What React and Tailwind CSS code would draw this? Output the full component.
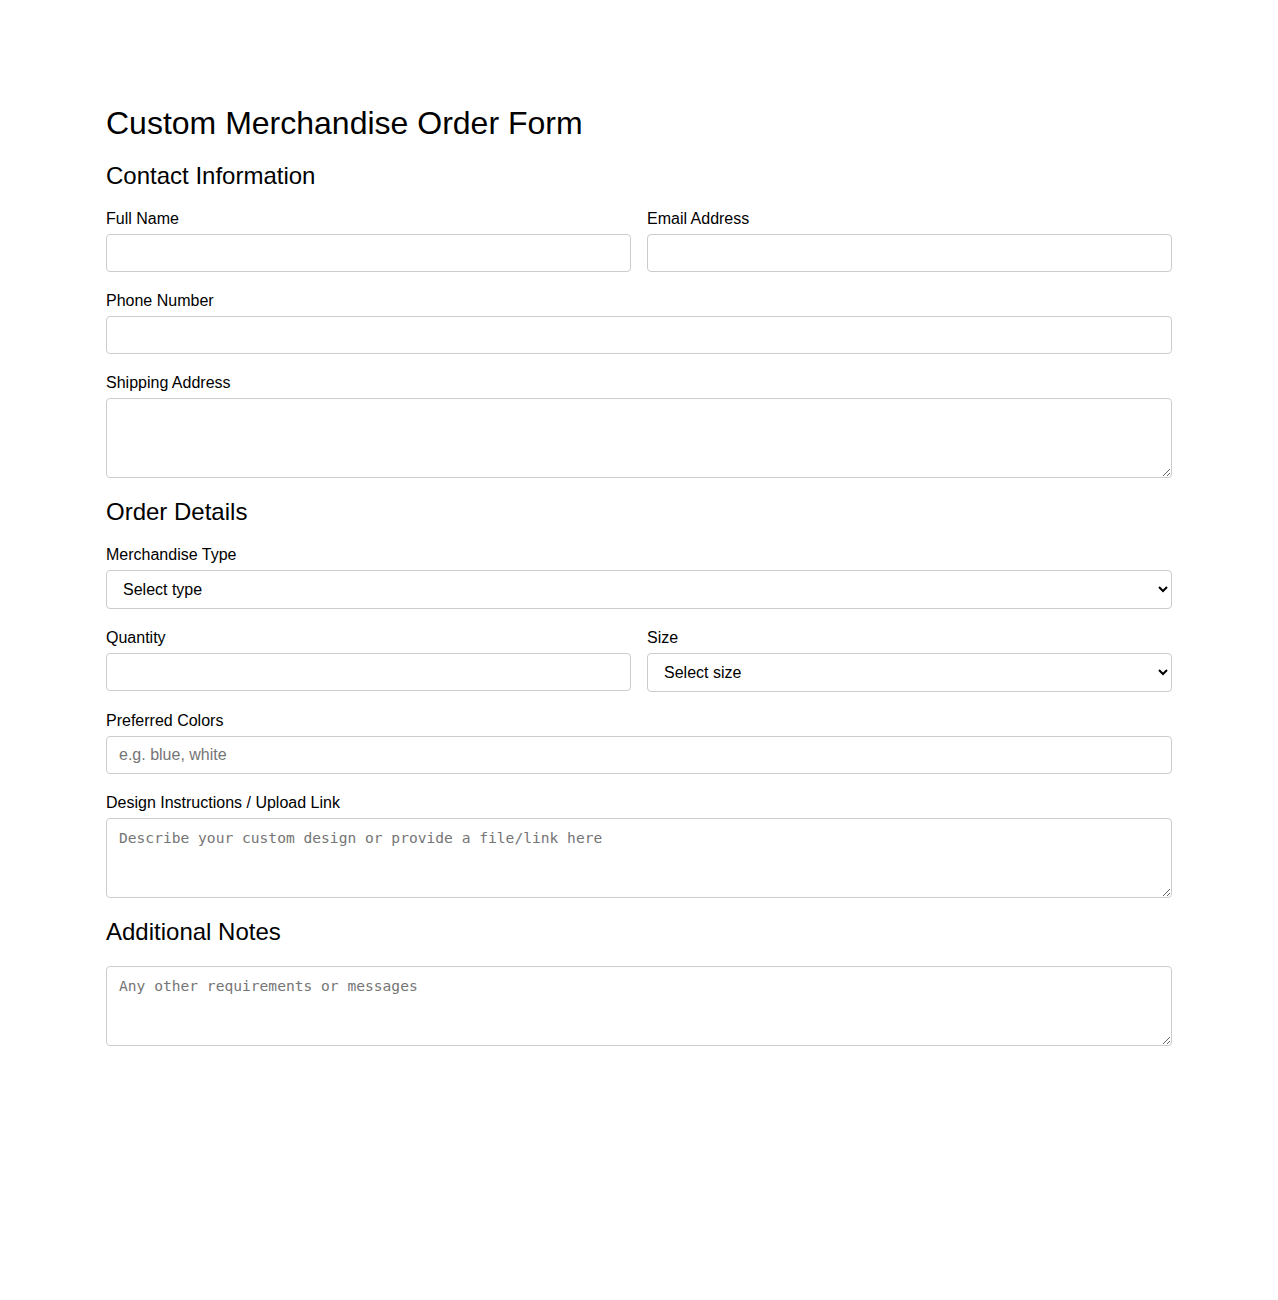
import React, { useState } from 'react';

const inputClass =
  'block w-full h-[38px] px-3 border border-[#ccc] rounded-[4px] bg-white text-[16px] text-black placeholder:text-[#757575] outline-none focus:border-[#888]';
const selectClass =
  'block w-full h-[39px] px-3 border border-[#ccc] rounded-[4px] bg-white text-[16px] text-black outline-none focus:border-[#888]';
const areaClass =
  'block w-full h-[80px] px-3 pt-[8px] pb-[10px] border border-[#ccc] rounded-[4px] bg-white text-[14.6px] text-black placeholder:text-[#757575] outline-none focus:border-[#888]';

const Field = ({ label, children }) => (
  <div>
    <label className="block text-[16px] leading-[18px] mb-[6px]">{label}</label>
    {children}
  </div>
);

const App = () => {
  const [form, setForm] = useState({
    name: '',
    email: '',
    phone: '',
    address: '',
    type: '',
    quantity: '',
    size: '',
    colors: '',
    design: '',
    notes: '',
  });

  const update = (key) => (e) => setForm({ ...form, [key]: e.target.value });

  return (
    <div
      className="min-h-[1300px] bg-white text-black"
      style={{ fontFamily: '"Liberation Sans", Arial, sans-serif' }}
    >
      <form
        onSubmit={(e) => e.preventDefault()}
        className="max-w-[1066px] mx-auto pt-[105px] flex flex-col gap-5"
      >
        <h1 className="text-[32px] leading-[37px] font-normal">Custom Merchandise Order Form</h1>

        <h2 className="text-[24px] leading-[28px] font-normal">Contact Information</h2>

        <div className="grid grid-cols-2 gap-4">
          <Field label="Full Name">
            <input type="text" value={form.name} onChange={update('name')} className={inputClass} />
          </Field>
          <Field label="Email Address">
            <input type="email" value={form.email} onChange={update('email')} className={inputClass} />
          </Field>
        </div>

        <Field label="Phone Number">
          <input type="tel" value={form.phone} onChange={update('phone')} className={inputClass} />
        </Field>

        <Field label="Shipping Address">
          <textarea
            value={form.address}
            onChange={update('address')}
            className={areaClass}
            style={{ fontFamily: '"DejaVu Sans Mono", monospace' }}
          />
        </Field>

        <h2 className="text-[24px] leading-[28px] font-normal">Order Details</h2>

        <Field label="Merchandise Type">
          <select value={form.type} onChange={update('type')} className={selectClass}>
            <option value="">Select type</option>
            <option>T-Shirt</option>
            <option>Hoodie</option>
            <option>Mug</option>
            <option>Cap</option>
            <option>Tote Bag</option>
          </select>
        </Field>

        <div className="grid grid-cols-2 gap-4">
          <Field label="Quantity">
            <input type="number" min="1" value={form.quantity} onChange={update('quantity')} className={inputClass} />
          </Field>
          <Field label="Size">
            <select value={form.size} onChange={update('size')} className={selectClass}>
              <option value="">Select size</option>
              <option>S</option>
              <option>M</option>
              <option>L</option>
              <option>XL</option>
              <option>XXL</option>
            </select>
          </Field>
        </div>

        <Field label="Preferred Colors">
          <input
            type="text"
            value={form.colors}
            onChange={update('colors')}
            placeholder="e.g. blue, white"
            className={inputClass}
          />
        </Field>

        <Field label="Design Instructions / Upload Link">
          <textarea
            value={form.design}
            onChange={update('design')}
            placeholder="Describe your custom design or provide a file/link here"
            className={areaClass}
            style={{ fontFamily: '"DejaVu Sans Mono", monospace' }}
          />
        </Field>

        <h2 className="text-[24px] leading-[28px] font-normal">Additional Notes</h2>

        <textarea
          value={form.notes}
          onChange={update('notes')}
          placeholder="Any other requirements or messages"
          className={areaClass}
          style={{ fontFamily: '"DejaVu Sans Mono", monospace' }}
        />
      </form>
    </div>
  );
};

export default App;
